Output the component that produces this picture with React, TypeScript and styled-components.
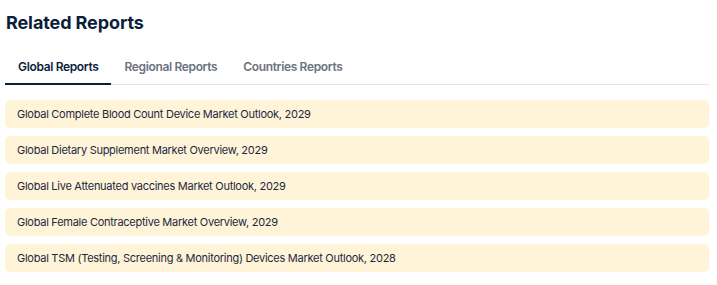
import React, { useState } from "react";
import styled, { createGlobalStyle } from "styled-components";

const GlobalStyle = createGlobalStyle`
  html, body { margin: 0; padding: 0; background: #ffffff; }
  body { font-family: Inter, "Noto Sans", sans-serif; }
`;

const Wrapper = styled.section`
  padding: 10px 8px 0 5px;
  display: flex;
  flex-direction: column;
`;

const Title = styled.h2`
  margin: 0 0 0 1px;
  font-size: 18px;
  line-height: 26px;
  font-weight: 700;
  color: #0c1e3a;
  letter-spacing: -0.1px;
`;

const TabBar = styled.div`
  display: flex;
  margin-top: 22px;
  border-bottom: 1px solid #e3e5e8;
`;

const Tab = styled.button<{ $active?: boolean }>`
  appearance: none;
  background: none;
  border: none;
  font-family: inherit;
  font-size: 12px;
  font-weight: 600;
  line-height: 16px;
  letter-spacing: -0.35px;
  padding: 1px 13px 8px 13px;
  margin-bottom: -1px;
  cursor: pointer;
  color: ${(p) => (p.$active ? "#0c1e3a" : "#6b7280")};
  border-bottom: 2px solid ${(p) => (p.$active ? "#0c1e3a" : "transparent")};
`;

const List = styled.ul`
  list-style: none;
  margin: 15px 0 0 0;
  padding: 0;
  display: flex;
  flex-direction: column;
  gap: 8px;
`;

const Row = styled.li`
  background: #fff4d7;
  border-radius: 5px;
  height: 28px;
  display: flex;
  align-items: center;
  padding: 0 12px;
  font-size: 11px;
  letter-spacing: -0.27px;
  color: #1c2744;
`;

const reports = [
  "Global Complete Blood Count Device Market Outlook, 2029",
  "Global Dietary Supplement Market Overview, 2029",
  "Global Live Attenuated vaccines Market Outlook, 2029",
  "Global Female Contraceptive Market Overview, 2029",
  "Global TSM (Testing, Screening & Monitoring) Devices Market Outlook, 2028",
];

const tabs = ["Global Reports", "Regional Reports", "Countries Reports"];

export default function App() {
  const [active, setActive] = useState(0);
  return (
    <>
      <GlobalStyle />
      <Wrapper>
        <Title>Related Reports</Title>
        <TabBar>
          {tabs.map((t, i) => (
            <Tab key={t} $active={i === active} onClick={() => setActive(i)}>
              {t}
            </Tab>
          ))}
        </TabBar>
        <List>
          {reports.map((r) => (
            <Row key={r}>{r}</Row>
          ))}
        </List>
      </Wrapper>
    </>
  );
}
